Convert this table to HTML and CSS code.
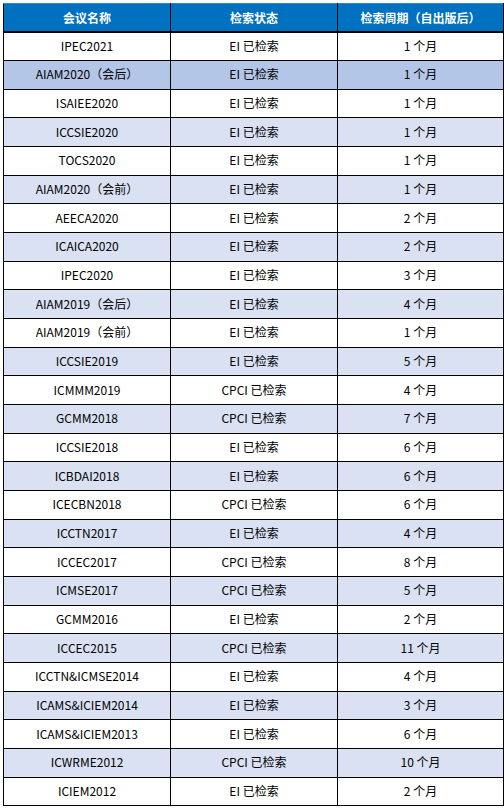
FILE: index.html
```html
<!DOCTYPE html>
<html lang="zh">
<head>
<meta charset="utf-8">
<link rel="stylesheet" href="styles.css">
</head>
<body>
<table class="tbl">
<thead>
<tr class="head"><th class="c1">会议名称</th><th class="c2">检索状态</th><th class="c3">检索周期（自出版后）</th></tr>
</thead>
<tbody>
<tr><td>IPEC2021</td><td>EI 已检索</td><td>1 个月</td></tr>
<tr class="hi"><td>AIAM2020（会后）</td><td>EI 已检索</td><td>1 个月</td></tr>
<tr><td>ISAIEE2020</td><td>EI 已检索</td><td>1 个月</td></tr>
<tr class="alt"><td>ICCSIE2020</td><td>EI 已检索</td><td>1 个月</td></tr>
<tr><td>TOCS2020</td><td>EI 已检索</td><td>1 个月</td></tr>
<tr class="alt"><td>AIAM2020（会前）</td><td>EI 已检索</td><td>1 个月</td></tr>
<tr><td>AEECA2020</td><td>EI 已检索</td><td>2 个月</td></tr>
<tr class="alt"><td>ICAICA2020</td><td>EI 已检索</td><td>2 个月</td></tr>
<tr><td>IPEC2020</td><td>EI 已检索</td><td>3 个月</td></tr>
<tr class="alt"><td>AIAM2019（会后）</td><td>EI 已检索</td><td>4 个月</td></tr>
<tr><td>AIAM2019（会前）</td><td>EI 已检索</td><td>1 个月</td></tr>
<tr class="alt"><td>ICCSIE2019</td><td>EI 已检索</td><td>5 个月</td></tr>
<tr><td>ICMMM2019</td><td>CPCI 已检索</td><td>4 个月</td></tr>
<tr class="alt"><td>GCMM2018</td><td>CPCI 已检索</td><td>7 个月</td></tr>
<tr><td>ICCSIE2018</td><td>EI 已检索</td><td>6 个月</td></tr>
<tr class="alt"><td>ICBDAI2018</td><td>EI 已检索</td><td>6 个月</td></tr>
<tr><td>ICECBN2018</td><td>CPCI 已检索</td><td>6 个月</td></tr>
<tr class="alt"><td>ICCTN2017</td><td>EI 已检索</td><td>4 个月</td></tr>
<tr><td>ICCEC2017</td><td>CPCI 已检索</td><td>8 个月</td></tr>
<tr class="alt"><td>ICMSE2017</td><td>CPCI 已检索</td><td>5 个月</td></tr>
<tr><td>GCMM2016</td><td>EI 已检索</td><td>2 个月</td></tr>
<tr class="alt"><td>ICCEC2015</td><td>CPCI 已检索</td><td>11 个月</td></tr>
<tr><td>ICCTN&amp;ICMSE2014</td><td>EI 已检索</td><td>4 个月</td></tr>
<tr class="alt"><td>ICAMS&amp;ICIEM2014</td><td>EI 已检索</td><td>3 个月</td></tr>
<tr><td>ICAMS&amp;ICIEM2013</td><td>EI 已检索</td><td>6 个月</td></tr>
<tr class="alt"><td>ICWRME2012</td><td>CPCI 已检索</td><td>10 个月</td></tr>
<tr><td>ICIEM2012</td><td>EI 已检索</td><td>2 个月</td></tr>
</tbody>
</table>
</body>
</html>
```
FILE: styles.css
```css
html, body {
  margin: 0;
  padding: 0;
  background: #ffffff;
}
body {
  padding: 3px 0 0 3px;
  font-family: "Noto Sans CJK SC", "Noto Sans", sans-serif;
  font-size: 12px;
  color: #000000;
}
.tbl {
  border-collapse: collapse;
  width: 497px;
  table-layout: fixed;
}
.tbl .c1 { width: 166px; }
.tbl .c2 { width: 166px; }
.tbl .c3 { width: 165px; }
.tbl th, .tbl td {
  border: 1px solid #000000;
  text-align: center;
  padding: 0;
  line-height: 14px;
}
.head th {
  background: #0070c0;
  color: #ffffff;
  font-weight: bold;
  height: 27px;
  border-top: 1px solid #2b88d0;
  border-bottom: 2px solid #000;
}
.tbl tbody tr {
  height: 28.67px;
}
.tbl tbody td {
  padding-bottom: 1px;
}
.alt td {
  background: #d9e1f2;
}
.hi td {
  background: #b4c6e7;
}
```
